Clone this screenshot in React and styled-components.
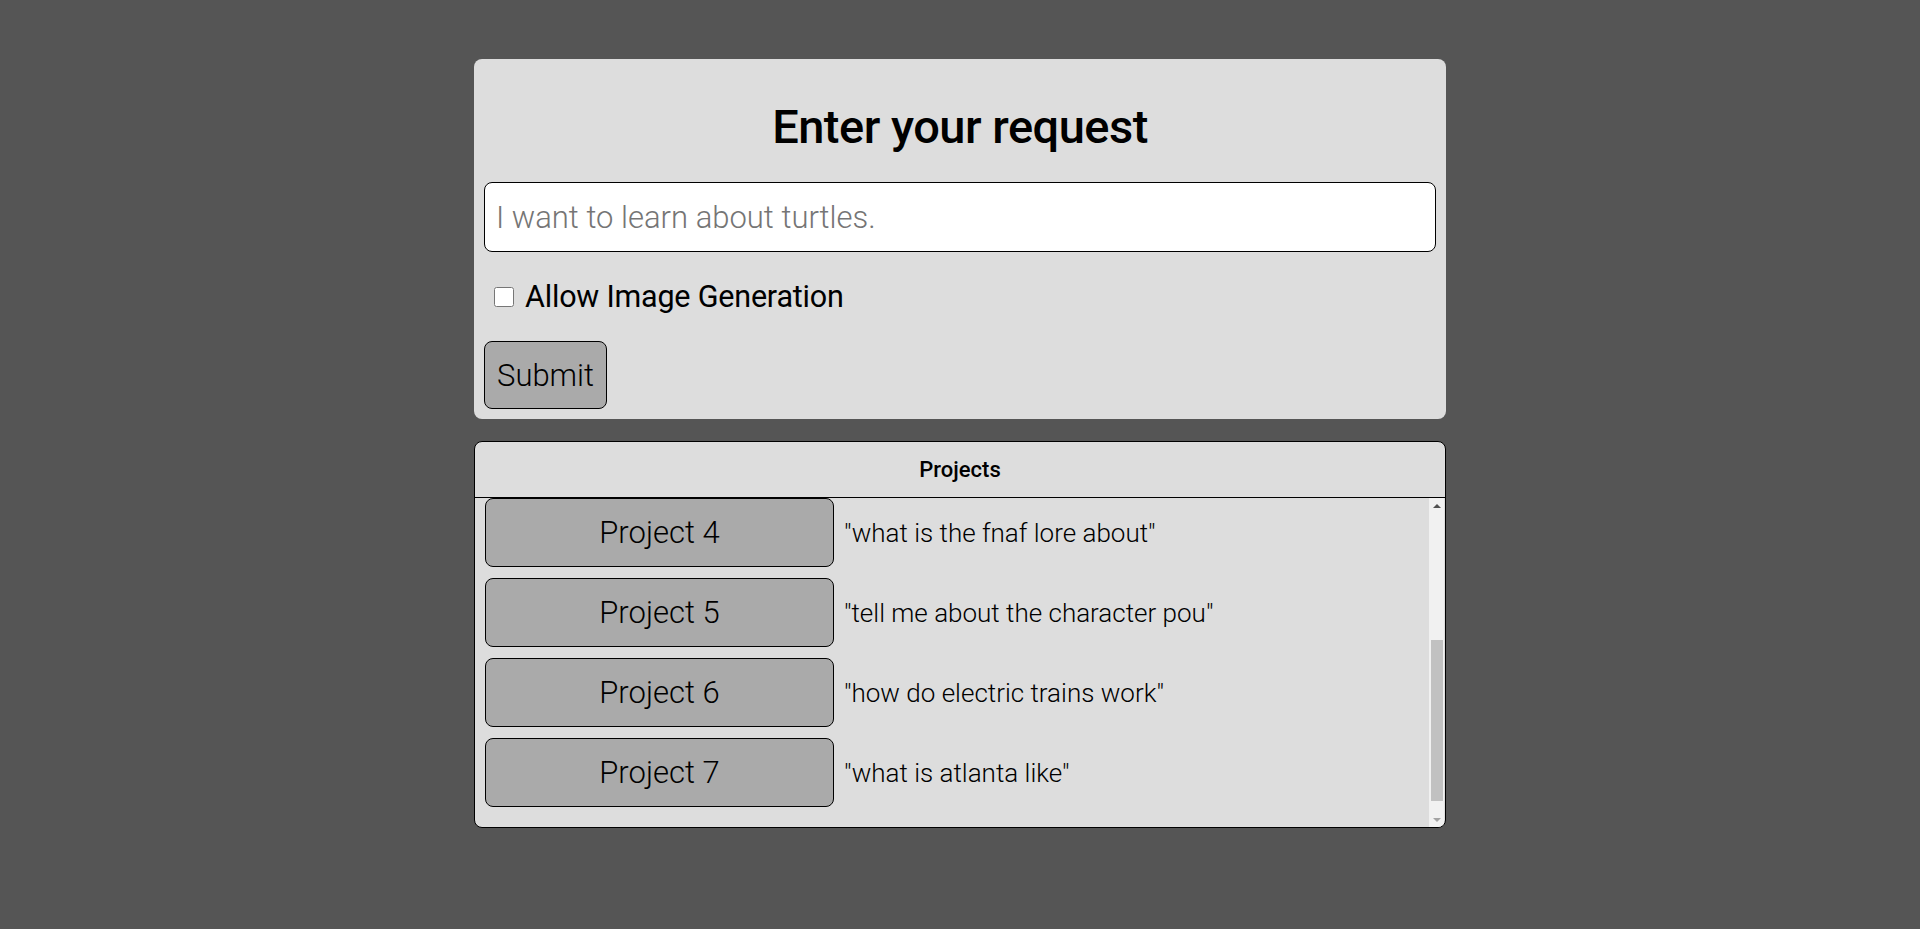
import React, { useLayoutEffect, useRef } from "react";
import styled, { createGlobalStyle } from "styled-components";

const GlobalStyle = createGlobalStyle`
  html, body {
    margin: 0;
    padding: 0;
    background: #555555;
  }
  body {
    font-family: Roboto, "Noto Sans", "Liberation Sans", sans-serif;
    color: #000;
  }
`;

const Page = styled.div`
  width: 972px;
  margin: 0 auto;
  padding-top: 59px;
  display: flex;
  flex-direction: column;
  gap: 22px;
`;

const RequestCard = styled.form`
  background: #dddddd;
  border-radius: 8px;
  padding: 10px;
  display: flex;
  flex-direction: column;
  align-items: flex-start;
`;

const Title = styled.h1`
  align-self: stretch;
  text-align: center;
  font-size: 47px;
  font-weight: 500;
  line-height: 58px;
  letter-spacing: -0.5px;
  margin: 29px 0 26px;
`;

const RequestInput = styled.input`
  box-sizing: border-box;
  width: 100%;
  height: 70px;
  border: 1px solid #000;
  border-radius: 8px;
  background: #fff;
  padding: 0 11px;
  font-family: inherit;
  font-size: 31px;
  font-weight: 300;
  outline: none;
  &::placeholder {
    color: #757575;
  }
`;

const CheckRow = styled.label`
  display: flex;
  align-items: center;
  gap: 11px;
  line-height: 40px;
  margin: 25px 0 24px 10px;
  font-size: 30.5px;
  font-weight: 400;
  letter-spacing: -0.2px;
`;

const Check = styled.input`
  width: 20px;
  height: 20px;
  margin: 0;
`;

const SubmitButton = styled.button`
  height: 68px;
  padding: 0 12px;
  background: #aaaaaa;
  border: 1px solid #000;
  border-radius: 8px;
  font-family: inherit;
  font-size: 31px;
  font-weight: 300;
  color: #000;
`;

const ProjectsCard = styled.section`
  background: #dddddd;
  border: 1px solid #000;
  border-radius: 8px;
  overflow: hidden;
`;

const ProjectsHeader = styled.div`
  height: 55px;
  border-bottom: 1px solid #000;
  display: flex;
  align-items: center;
  justify-content: center;
  font-size: 22px;
  font-weight: 500;
`;

const ProjectsBody = styled.div`
  display: flex;
  height: 329px;
`;

const ProjectList = styled.div`
  flex: 1;
  overflow: hidden;
  padding: 10px 10px 9px;
  box-sizing: border-box;
`;

const ScrollTrack = styled.div`
  flex: 0 0 15px;
  margin-right: 1px;
  background: #f1f1f1;
  display: flex;
  flex-direction: column;
`;

const ScrollArrow = styled.div`
  height: 15px;
  display: flex;
  align-items: center;
  justify-content: center;
  &::before {
    content: "";
    width: 0;
    height: 0;
    border-left: 4px solid transparent;
    border-right: 4px solid transparent;
    ${(p) =>
      p.$down
        ? `border-top: 4px solid #a3a3a3;`
        : `border-bottom: 4px solid #505050;`}
  }
`;

const ScrollSpace = styled.div`
  flex: 1;
  display: flex;
  flex-direction: column;
  padding-top: 127px;
`;

const ScrollThumb = styled.div`
  height: 161px;
  margin: 0 1px 0 2px;
  background: #c1c1c1;
`;

const ProjectRow = styled.div`
  display: flex;
  align-items: center;
  gap: 10px;
  margin-bottom: 11px;
`;

const ProjectButton = styled.button`
  flex: 0 0 349px;
  height: 69px;
  background: #aaaaaa;
  border: 1px solid #000;
  border-radius: 8px;
  font-family: inherit;
  font-size: 31px;
  font-weight: 300;
  color: #000;
`;

const Prompt = styled.span`
  font-size: 26px;
  font-weight: 300;
`;

const projects = [
  { id: 1, prompt: "how do volcanoes form" },
  { id: 2, prompt: "explain black holes to me" },
  { id: 3, prompt: "what do sea turtles eat" },
  { id: 4, prompt: "what is the fnaf lore about" },
  { id: 5, prompt: "tell me about the character pou" },
  { id: 6, prompt: "how do electric trains work" },
  { id: 7, prompt: "what is atlanta like" },
];

export default function App() {
  const listRef = useRef(null);

  // list sits scrolled to the newest projects
  useLayoutEffect(() => {
    if (listRef.current) {
      listRef.current.scrollTop = listRef.current.scrollHeight;
    }
  }, []);

  return (
    <>
      <GlobalStyle />
      <Page>
        <RequestCard onSubmit={(e) => e.preventDefault()}>
          <Title>Enter your request</Title>
          <RequestInput type="text" placeholder="I want to learn about turtles." />
          <CheckRow>
            <Check type="checkbox" />
            Allow Image Generation
          </CheckRow>
          <SubmitButton type="submit">Submit</SubmitButton>
        </RequestCard>

        <ProjectsCard>
          <ProjectsHeader>Projects</ProjectsHeader>
          <ProjectsBody>
            <ProjectList ref={listRef}>
              {projects.map((p) => (
                <ProjectRow key={p.id}>
                  <ProjectButton type="button">Project {p.id}</ProjectButton>
                  <Prompt>"{p.prompt}"</Prompt>
                </ProjectRow>
              ))}
            </ProjectList>
            <ScrollTrack>
              <ScrollArrow />
              <ScrollSpace>
                <ScrollThumb />
              </ScrollSpace>
              <ScrollArrow $down />
            </ScrollTrack>
          </ProjectsBody>
        </ProjectsCard>
      </Page>
    </>
  );
}
